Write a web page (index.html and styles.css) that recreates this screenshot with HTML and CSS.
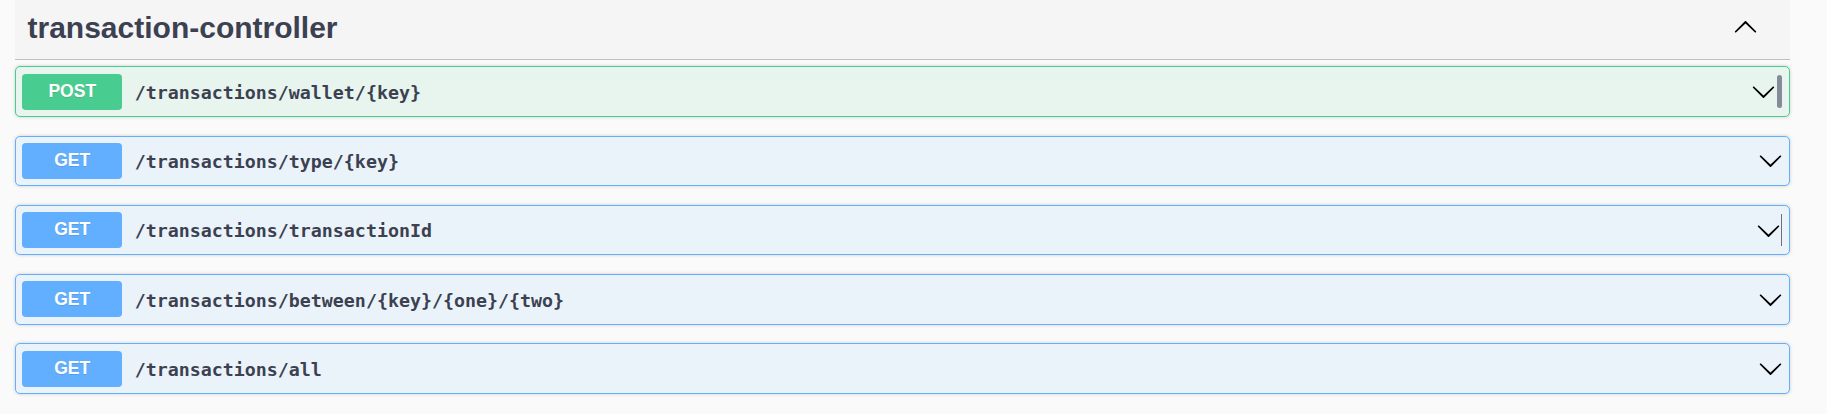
FILE: index.html
```html
<!DOCTYPE html>
<html lang="en">
<head>
<meta charset="utf-8">
<title>transaction-controller</title>
<link rel="stylesheet" href="styles.css">
</head>
<body>
<div class="section">
  <div class="tag">
    <h3 class="tag-title">transaction-controller</h3>
    <button class="expand" aria-label="collapse">
      <svg viewBox="0 0 20 20" width="25" height="25"><path d="M17.418 13.891c.272.268.709.268.979 0s.271-.701 0-.969l-7.908-7.83c-.27-.268-.707-.268-.979 0l-7.908 7.83c-.27.268-.27.701 0 .969.271.268.709.268.979 0L10 6.75l7.418 7.141z"/></svg>
    </button>
  </div>
  <div class="ops">
    <div class="op op-post">
      <span class="method">POST</span>
      <span class="path">/transactions/wallet/{key}</span>
      <svg class="arrow" viewBox="0 0 20 20" width="25" height="25"><path d="M17.418 6.109c.272-.268.709-.268.979 0s.271.701 0 .969l-7.908 7.83c-.27.268-.707.268-.979 0l-7.908-7.83c-.27-.268-.27-.701 0-.969.271-.268.709-.268.979 0L10 13.25l7.418-7.141z"/></svg>
      <span class="bar"></span>
    </div>
    <div class="op op-get">
      <span class="method">GET</span>
      <span class="path">/transactions/type/{key}</span>
      <svg class="arrow" viewBox="0 0 20 20" width="25" height="25"><path d="M17.418 6.109c.272-.268.709-.268.979 0s.271.701 0 .969l-7.908 7.83c-.27.268-.707.268-.979 0l-7.908-7.83c-.27-.268-.27-.701 0-.969.271-.268.709-.268.979 0L10 13.25l7.418-7.141z"/></svg>
    </div>
    <div class="op op-get">
      <span class="method">GET</span>
      <span class="path">/transactions/transactionId</span>
      <svg class="arrow" viewBox="0 0 20 20" width="25" height="25"><path d="M17.418 6.109c.272-.268.709-.268.979 0s.271.701 0 .969l-7.908 7.83c-.27.268-.707.268-.979 0l-7.908-7.83c-.27-.268-.27-.701 0-.969.271-.268.709-.268.979 0L10 13.25l7.418-7.141z"/></svg>
      <span class="caret"></span>
    </div>
    <div class="op op-get">
      <span class="method">GET</span>
      <span class="path">/transactions/between/{key}/{one}/{two}</span>
      <svg class="arrow" viewBox="0 0 20 20" width="25" height="25"><path d="M17.418 6.109c.272-.268.709-.268.979 0s.271.701 0 .969l-7.908 7.83c-.27.268-.707.268-.979 0l-7.908-7.83c-.27-.268-.27-.701 0-.969.271-.268.709-.268.979 0L10 13.25l7.418-7.141z"/></svg>
    </div>
    <div class="op op-get">
      <span class="method">GET</span>
      <span class="path">/transactions/all</span>
      <svg class="arrow" viewBox="0 0 20 20" width="25" height="25"><path d="M17.418 6.109c.272-.268.709-.268.979 0s.271.701 0 .969l-7.908 7.83c-.27.268-.707.268-.979 0l-7.908-7.83c-.27-.268-.27-.701 0-.969.271-.268.709-.268.979 0L10 13.25l7.418-7.141z"/></svg>
    </div>
  </div>
</div>
</body>
</html>
```
FILE: styles.css
```css
html, body {
  margin: 0;
  padding: 0;
  background: #fafafa;
}
body {
  font-family: "Liberation Sans", Arial, sans-serif;
  color: #3b4151;
}
.section {
  padding: 0 37px 0 15px;
}
.tag {
  display: flex;
  align-items: center;
  box-sizing: border-box;
  height: 60px;
  padding: 0 31.75px 3px 12.5px;
  background: #f5f5f5;
  border-bottom: 1px solid #bdbfc4;
}
.tag-title {
  flex: 1;
  margin: 0;
  font-size: 30px;
  font-weight: bold;
  color: #3b4151;
}
.expand {
  display: flex;
  border: none;
  background: none;
  padding: 0;
  margin: 0 0 2px 0;
  cursor: pointer;
}
.expand svg {
  fill: #000;
  display: block;
}
.ops {
  padding-top: 6.25px;
}
.op {
  display: flex;
  align-items: center;
  box-sizing: border-box;
  height: 50.5px;
  margin-bottom: 18.75px;
  padding: 6.25px;
  border: 1px solid #61affe;
  border-radius: 5px;
  background: #ebf3fa;
  box-shadow: 0 0 3.75px rgba(0, 0, 0, 0.19);
}
.op-post {
  border-color: #49cc90;
  background: #e8f5ef;
}
.method {
  display: flex;
  align-items: center;
  justify-content: center;
  box-sizing: border-box;
  width: 100px;
  height: 36px;
  padding-bottom: 0.5px;
  border-radius: 3.75px;
  background: #61affe;
  color: #fff;
  font-size: 17.5px;
  font-weight: bold;
  text-shadow: 0 1px 0 rgba(0, 0, 0, 0.1);
}
.op-post .method {
  background: #49cc90;
}
.path {
  flex: 1;
  padding: 1.5px 0 0 12.5px;
  font-family: "DejaVu Sans Mono", "Liberation Mono", monospace;
  font-size: 18.3px;
  font-weight: 600;
  color: #3b4151;
}
.arrow {
  display: block;
  fill: #000;
  flex: none;
}
.bar {
  flex: none;
  width: 5px;
  height: 33px;
  margin: 0 1px 0 1px;
  border-radius: 3px;
  background: #868b98;
}
.caret {
  flex: none;
  width: 1px;
  height: 32px;
  margin-right: 0.75px;
  background: #6b7080;
}
```
